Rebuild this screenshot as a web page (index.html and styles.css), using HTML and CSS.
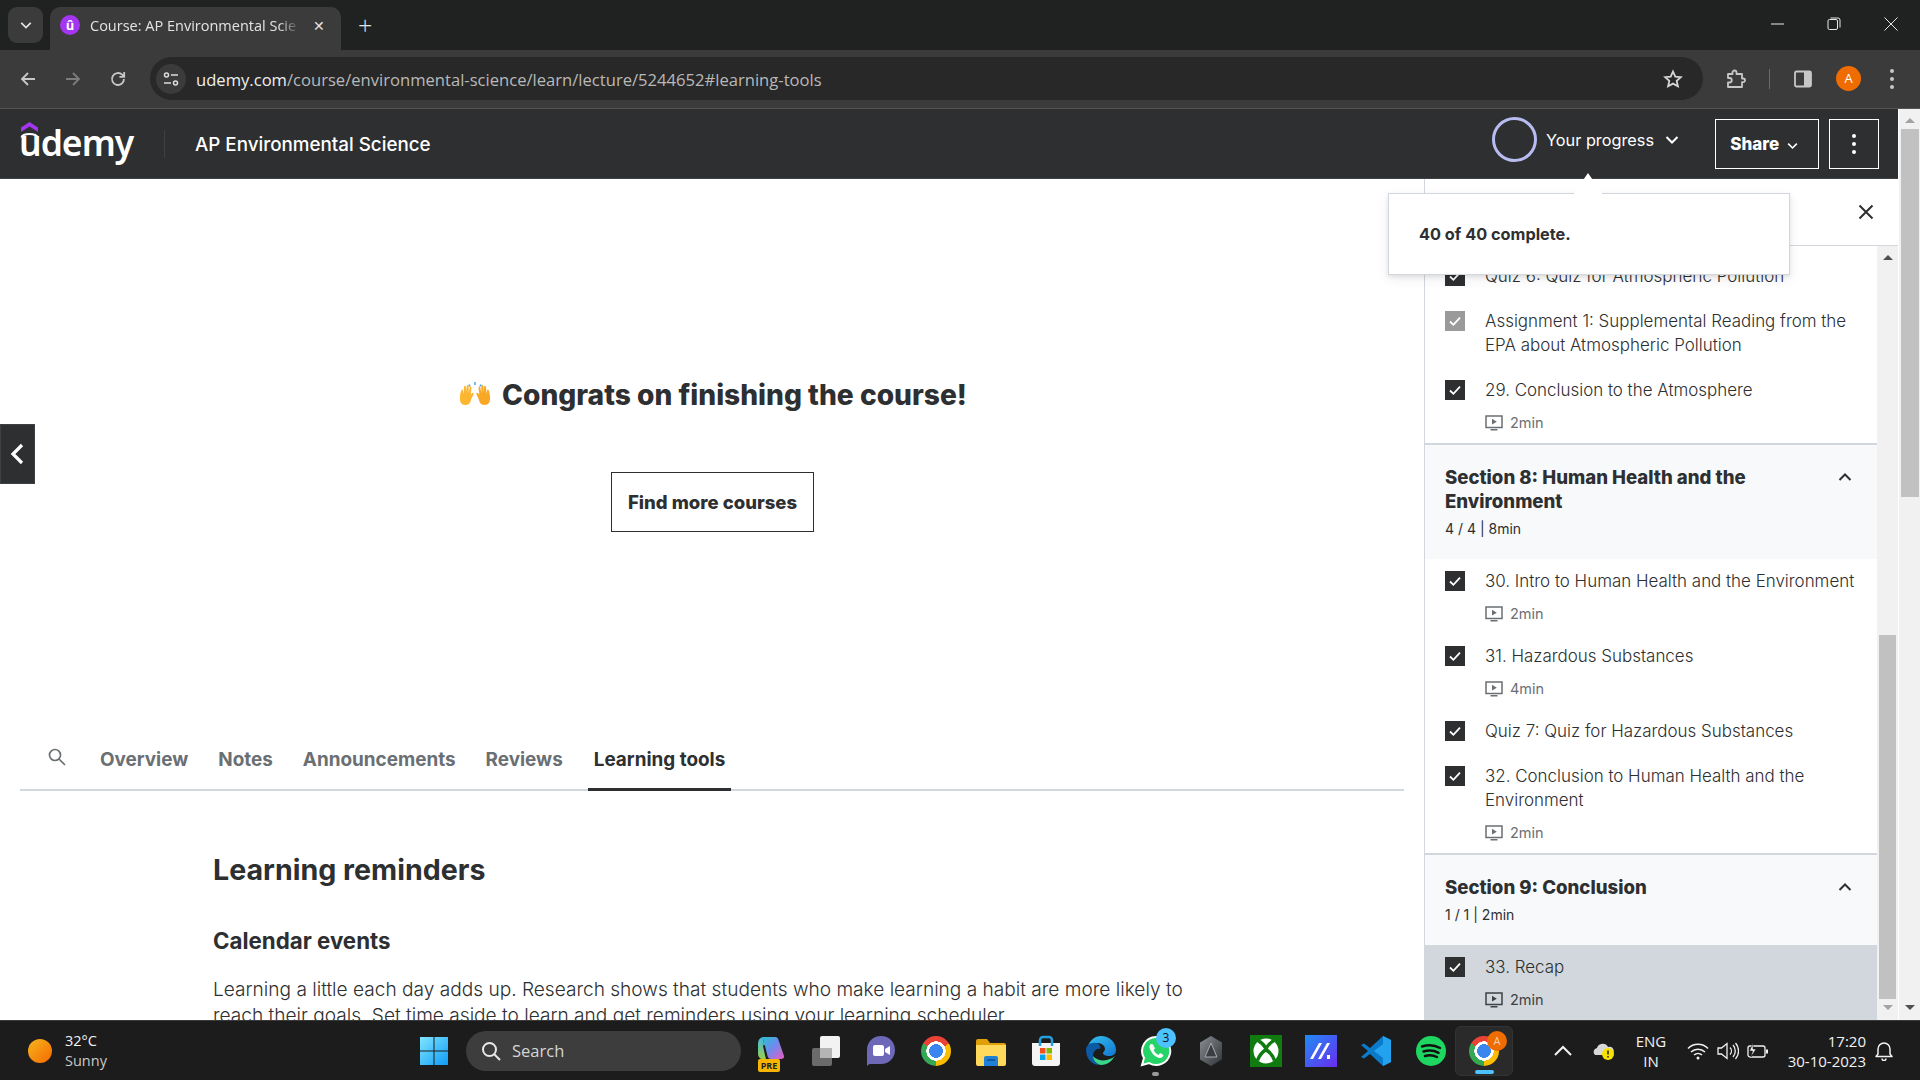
FILE: index.html
```html
<!DOCTYPE html>
<html lang="en">
<head>
    <meta charset="UTF-8">
    <title>Course: AP Environmental Science</title>
    <link rel="stylesheet" href="styles.css">
</head>
<body>
    <svg class="sprite" width="0" height="0">
        <symbol id="check" viewBox="0 0 20 20"><path d="M5 10.500l3.400 3.300L15 6.600" fill="none" stroke="#fff" stroke-width="1.800"/></symbol>
        <symbol id="video" viewBox="0 0 18 16"><path d="M1 1h16v11.500H1z" fill="none" stroke="currentColor" stroke-width="1.500"/><path d="M7 3.800v5.800l4.800-2.900z" fill="currentColor"/><path d="M5.500 14h7v1.500h-7z" fill="currentColor"/></symbol>
        <symbol id="chev-up" viewBox="0 0 14 10"><path d="M1.500 8L7 2.500 12.500 8" fill="none" stroke="currentColor" stroke-width="2"/></symbol>
        <symbol id="chev-down" viewBox="0 0 14 10"><path d="M1.500 2L7 7.500 12.500 2" fill="none" stroke="currentColor" stroke-width="2"/></symbol>
    </svg>

    <div class="tabstrip">
        <button class="tab-list"><svg width="12" height="9"><use href="#chev-down"/></svg></button>
        <div class="tab">
            <span class="favicon">û</span>
            <span class="tab-title">Course: AP Environmental Scie</span>
            <span class="tab-close">✕</span>
        </div>
        <span class="new-tab">+</span>
        <div class="win-controls">
            <svg width="14" height="14" viewBox="0 0 14 14"><path d="M1 7h13" stroke="#e8e8e8"/></svg>
            <svg width="14" height="14" viewBox="0 0 14 14"><rect x="1" y="2.500" width="9.500" height="10" rx="1.500" fill="none" stroke="#e8e8e8"/><path d="M3.500 1h7.500a2 2 0 0 1 2 2v7.500" fill="none" stroke="#e8e8e8"/></svg>
            <svg width="14" height="14" viewBox="0 0 14 14"><path d="M.5.500l13 13M13.500.500l-13 13" stroke="#e8e8e8"/></svg>
        </div>
    </div>

    <div class="toolbar">
        <div class="nav-btns">
            <svg width="18" height="18" viewBox="0 0 18 18"><path d="M16 9H3M9 3L3 9l6 6" fill="none" stroke="#c7c7c7" stroke-width="1.800"/></svg>
            <svg width="18" height="18" viewBox="0 0 18 18"><path d="M2 9h13M9 3l6 6-6 6" fill="none" stroke="#7c7c7c" stroke-width="1.800"/></svg>
            <svg width="18" height="18" viewBox="0 0 18 18"><path d="M15 9a6 6 0 1 1-1.800-4.300L15 6.500M15.200 2v4.800h-4.800" fill="none" stroke="#c7c7c7" stroke-width="1.800"/></svg>
        </div>
        <div class="omnibox">
            <span class="site-icon">
                <svg width="16" height="14" viewBox="0 0 16 14"><circle cx="3.500" cy="3" r="2" fill="none" stroke="#ddd" stroke-width="1.500"/><path d="M8 3h7M1 11h7" stroke="#ddd" stroke-width="1.500"/><circle cx="12.500" cy="11" r="2" fill="none" stroke="#ddd" stroke-width="1.500"/></svg>
            </span>
            <span class="url"><b>udemy.com</b>/course/environmental-science/learn/lecture/5244652#learning-tools</span>
            <svg class="star" width="20" height="20" viewBox="0 0 20 20"><path d="M10 2.500l2.300 5.100 5.500.6-4.100 3.700 1.200 5.400L10 14.600l-4.900 2.700 1.200-5.400L2.200 8.200l5.500-.6z" fill="none" stroke="#d6d6d6" stroke-width="1.800"/></svg>
        </div>
        <div class="tool-icons">
            <svg width="20" height="20" viewBox="0 0 20 20"><path d="M2 5h4.500V3.500a2 2 0 0 1 4 0V5H16v4.500h1.200a1.800 1.800 0 0 1 0 3.600H16V18H2v-4.500h1.500a2 2 0 0 0 0-4.500H2z" fill="none" stroke="#c7c7c7" stroke-width="1.800" stroke-linejoin="round"/></svg>
            <span class="tool-sep"></span>
            <svg width="18" height="18" viewBox="0 0 18 18"><rect x="1" y="1.500" width="16" height="15" rx="1.500" fill="none" stroke="#c7c7c7" stroke-width="1.800"/><path d="M10 1.500h6a1 1 0 0 1 1 1v13a1 1 0 0 1-1 1h-6z" fill="#c7c7c7"/></svg>
            <span class="avatar">A</span>
            <span class="kebab"><i></i><i></i><i></i></span>
        </div>
    </div>

    <div class="page">
        <div class="app">
            <header class="course-header">
                <div class="logo">
                    <svg class="logo-mark" width="19" height="16" viewBox="0 0 19 16"><path d="M9.500 0L18 5.500V10L9.500 4.500 1 10V5.500z" fill="#a435f0"/><path d="M1.500 15.500a8 3.500 0 0 1 16 0" fill="none" stroke="#fff" stroke-width="2"/></svg>
                    <span>udemy</span>
                </div>
                <span class="header-sep"></span>
                <div class="course-title">AP Environmental Science</div>
                <div class="progress">
                    <span class="progress-ring"></span>
                    <span>Your progress</span>
                    <svg width="14" height="10"><use href="#chev-down"/></svg>
                </div>
                <button class="share-btn">Share <svg width="11" height="8"><use href="#chev-down"/></svg></button>
                <button class="more-btn"><span class="kebab"><i></i><i></i><i></i></span></button>
            </header>

            <div class="course-body">
                <main class="main">
                    <section class="hero">
                        <h2 class="congrats">
                            <svg width="34" height="27" viewBox="0 0 34 27">
                                <path d="M2 15c0-3 1-6 1.500-7s1.500 0 1.500 1l.500 3 .500-7c0-1.500 2-1.500 2 0v6l.700-7c0-1.500 2-1.500 2 0v7l1-5.500c.300-1.500 2-1 1.800.500l-.800 6.500c1-1 2.200-2 3-1.500.500 1-2 4-3 8-.800 3-3 4-5.500 4-4 0-5.700-3-5.200-8.500z" fill="#fdb62f"/>
                                <path d="M32 15c0-3-1-6-1.500-7s-1.500 0-1.500 1l-.500 3-.500-7c0-1.500-2-1.500-2 0v6l-.700-7c0-1.500-2-1.500-2 0v7l-1-5.500c-.300-1.500-2-1-1.800.500l.800 6.500c-1-1-2.200-2-3-1.500-.500 1 2 4 3 8 .800 3 3 4 5.500 4 4 0 5.700-3 5.200-8.500z" fill="#f9a825"/>
                                <path d="M11 2.500l1 2M17 0v3M23 2.500l-1 2" stroke="#4aa8e8" stroke-width="1.500"/>
                            </svg>
                            Congrats on finishing the course!
                        </h2>
                        <button class="find-btn">Find more courses</button>
                    </section>

                    <nav class="tabs">
                        <svg class="tabs-search" width="20" height="20" viewBox="0 0 20 20"><circle cx="8" cy="8" r="5.500" fill="none" stroke="#6a6f73" stroke-width="1.700"/><path d="M12 12l6 6" stroke="#6a6f73" stroke-width="1.700"/></svg>
                        <a class="tabs-item">Overview</a>
                        <a class="tabs-item">Notes</a>
                        <a class="tabs-item">Announcements</a>
                        <a class="tabs-item">Reviews</a>
                        <a class="tabs-item tabs-item-active">Learning tools</a>
                    </nav>

                    <section class="tools">
                        <h2 class="tools-title">Learning reminders</h2>
                        <h3 class="tools-sub">Calendar events</h3>
                        <p class="tools-text">Learning a little each day adds up. Research shows that students who make learning a habit are more likely to reach their goals. Set time aside to learn and get reminders using your learning scheduler.</p>
                    </section>
                </main>

                <aside class="sidebar">
                    <div class="sidebar-head">
                        <svg width="16" height="16" viewBox="0 0 16 16"><path d="M1.500 1.500l13 13M14.500 1.500l-13 13" stroke="#2d2f31" stroke-width="2"/></svg>
                    </div>
                    <div class="sidebar-body">
                        <div class="curriculum">
                            <div class="item">
                                <span class="box"><svg width="20" height="20"><use href="#check"/></svg></span>
                                <div class="item-text">Quiz 6: Quiz for Atmospheric Pollution</div>
                            </div>
                            <div class="item">
                                <span class="box box-muted"><svg width="20" height="20"><use href="#check"/></svg></span>
                                <div class="item-text">Assignment 1: Supplemental Reading from the EPA about Atmospheric Pollution</div>
                            </div>
                            <div class="item">
                                <span class="box"><svg width="20" height="20"><use href="#check"/></svg></span>
                                <div class="item-text">29. Conclusion to the Atmosphere
                                    <div class="dur"><svg width="18" height="16"><use href="#video"/></svg>2min</div>
                                </div>
                            </div>
                            <div class="section">
                                <div class="section-main">
                                    <div class="section-title">Section 8: Human Health and the Environment</div>
                                    <div class="section-meta">4 / 4 | 8min</div>
                                </div>
                                <svg class="section-chev" width="14" height="10"><use href="#chev-up"/></svg>
                            </div>
                            <div class="item">
                                <span class="box"><svg width="20" height="20"><use href="#check"/></svg></span>
                                <div class="item-text">30. Intro to Human Health and the Environment
                                    <div class="dur"><svg width="18" height="16"><use href="#video"/></svg>2min</div>
                                </div>
                            </div>
                            <div class="item">
                                <span class="box"><svg width="20" height="20"><use href="#check"/></svg></span>
                                <div class="item-text">31. Hazardous Substances
                                    <div class="dur"><svg width="18" height="16"><use href="#video"/></svg>4min</div>
                                </div>
                            </div>
                            <div class="item">
                                <span class="box"><svg width="20" height="20"><use href="#check"/></svg></span>
                                <div class="item-text">Quiz 7: Quiz for Hazardous Substances</div>
                            </div>
                            <div class="item">
                                <span class="box"><svg width="20" height="20"><use href="#check"/></svg></span>
                                <div class="item-text">32. Conclusion to Human Health and the Environment
                                    <div class="dur"><svg width="18" height="16"><use href="#video"/></svg>2min</div>
                                </div>
                            </div>
                            <div class="section">
                                <div class="section-main">
                                    <div class="section-title">Section 9: Conclusion</div>
                                    <div class="section-meta">1 / 1 | 2min</div>
                                </div>
                                <svg class="section-chev" width="14" height="10"><use href="#chev-up"/></svg>
                            </div>
                            <div class="item item-current">
                                <span class="box"><svg width="20" height="20"><use href="#check"/></svg></span>
                                <div class="item-text">33. Recap
                                    <div class="dur"><svg width="18" height="16"><use href="#video"/></svg>2min</div>
                                </div>
                            </div>
                        </div>
                        <div class="scrollbar scrollbar-inner">
                            <span class="arrow-up arrow-dark"></span>
                            <span class="thumb"></span>
                            <span class="arrow-down"></span>
                        </div>
                    </div>
                </aside>
            </div>
        </div>
        <div class="scrollbar scrollbar-page">
            <span class="arrow-up"></span>
            <span class="thumb"></span>
            <span class="arrow-down arrow-dark"></span>
        </div>

        <button class="panel-toggle"><svg width="16" height="24" viewBox="0 0 16 24"><path d="M13 3L4 12l9 9" fill="none" stroke="#fff" stroke-width="3.200"/></svg></button>
        <div class="tooltip">40 of 40 complete.</div>
    </div>

    <footer class="taskbar">
        <div class="weather">
            <span class="sun"></span>
            <div class="weather-text">32°C<span>Sunny</span></div>
        </div>
        <svg class="winlogo" width="30" height="30" viewBox="0 0 30 30">
            <defs><linearGradient id="wg" x1="0" y1="0" x2="1" y2="1"><stop offset="0" stop-color="#7fe6ff"/><stop offset="1" stop-color="#0f9bf5"/></linearGradient></defs>
            <path d="M1 1h13.500v13.500H1zM15.500 1H29v13.500H15.500zM1 15.500h13.500V29H1zM15.500 15.500H29V29H15.500z" fill="url(#wg)"/>
        </svg>
        <div class="searchbox">
            <svg width="22" height="22" viewBox="0 0 22 22"><circle cx="9.500" cy="9.500" r="6.500" fill="none" stroke="#e8e8e8" stroke-width="2"/><path d="M14 14l6 6" stroke="#e8e8e8" stroke-width="2"/></svg>
            Search
        </div>
        <div class="apps">
            <span class="app-icon">
                <svg width="32" height="32" viewBox="0 0 32 32"><defs><linearGradient id="cp" x1="0" y1="0" x2="1" y2="1"><stop offset="0" stop-color="#27c3c9"/><stop offset=".45" stop-color="#6b8cf0"/><stop offset="1" stop-color="#e85bc0"/></linearGradient><linearGradient id="cp2" x1="0" y1="0" x2="0" y2="1"><stop offset="0" stop-color="#3fb7e8"/><stop offset="1" stop-color="#9bd04a"/></linearGradient></defs><path d="M9 2h11c2 0 3 1 3.500 3L29 21c.500 2-1 3-3 3H16c-2 0-3-1-3.500-3L10 11c-.500-2-2-1-2.500 1z" fill="url(#cp)"/><path d="M9 2C5 2 3 5 3 9v9c0 4 2 6 5 6h3l-1-4-2-9c-.500-2 1-7 1-8z" fill="url(#cp2)"/></svg>
                <span class="pre">PRE</span>
            </span>
            <span class="app-icon">
                <svg width="32" height="32" viewBox="0 0 32 32"><rect x="2" y="13" width="20" height="18" rx="2" fill="#6b6b6b"/><rect x="10" y="1" width="20" height="22" rx="2" fill="#f2f2f2"/><rect x="10" y="13" width="12" height="10" fill="#b5b5b5"/></svg>
            </span>
            <span class="app-icon">
                <svg width="32" height="32" viewBox="0 0 32 32"><path d="M16 1c8 0 14 6 14 14s-6 14-14 14H5c-1 0-2 1-3 2 0-3 0-10 0-16C2 7 8 1 16 1z" fill="#6d68b8"/><rect x="8" y="10" width="11" height="11" rx="2" fill="#fff"/><path d="M20 14l5-3v9l-5-3z" fill="#fff"/></svg>
            </span>
            <span class="app-icon"><span class="chrome"></span></span>
            <span class="app-icon">
                <svg width="32" height="32" viewBox="0 0 32 32"><path d="M1 6a2 2 0 0 1 2-2h9l3 4h14a2 2 0 0 1 2 2v3H1z" fill="#e0a008"/><path d="M1 10h30v19a2 2 0 0 1-2 2H3a2 2 0 0 1-2-2z" fill="#ffd95c"/><path d="M9 23a2 2 0 0 1 2-2h10a2 2 0 0 1 2 2v8H9z" fill="#1e80d6"/><path d="M12 25h8" stroke="#0b4f91" stroke-width="1.500"/></svg>
            </span>
            <span class="app-icon">
                <svg width="32" height="32" viewBox="0 0 32 32"><path d="M2 8h28v20a3 3 0 0 1-3 3H5a3 3 0 0 1-3-3z" fill="#f4f4f4"/><path d="M10 11V5a3 3 0 0 1 3-3h6a3 3 0 0 1 3 3v6" fill="none" stroke="#23a0e0" stroke-width="2.500"/><path d="M10 13h5.500v5.500H10z" fill="#f25022"/><path d="M16.500 13H22v5.500h-5.500z" fill="#7fba00"/><path d="M10 19.500h5.500V25H10z" fill="#00a4ef"/><path d="M16.500 19.500H22V25h-5.500z" fill="#ffb900"/></svg>
            </span>
            <span class="app-icon">
                <svg width="32" height="32" viewBox="0 0 32 32"><defs><linearGradient id="eg" x1="0" y1="0" x2="1" y2="1"><stop offset="0" stop-color="#35c1f1"/><stop offset="1" stop-color="#1277d0"/></linearGradient></defs><path d="M16 1c8 0 15 6 15 14 0 4-3 6-7 6-3 0-6-1-6-3 0-1 2-2 2-4 0-3-3-6-8-6-5 0-9 3-10 7C3 7 9 1 16 1z" fill="url(#eg)"/><path d="M1 15c0-5 5-8 10-7 4 1 5 4 4 6-3-1-7 2-7 7 0 4 3 8 8 9C8 31 1 24 1 15z" fill="#0c59a4"/><path d="M16 30c-5-1-8-5-8-9 0 0 5 6 14 4 3-1 7-2 8-5-2 6-8 10-14 10z" fill="#3ad68a"/></svg>
            </span>
            <span class="app-icon">
                <svg width="32" height="32" viewBox="0 0 32 32"><path d="M16 2a14 14 0 0 0-12 21L2 30l7.200-1.900A14 14 0 1 0 16 2z" fill="#25d366" stroke="#fff" stroke-width="2"/><path d="M11 9c-2 1-2 4 0 7 2 4 5 6 8 7 2 .500 4-1 4.500-3l-3.500-2-1.500 2c-2-1-4-3-5-5l1.500-1.500L13 9.500z" fill="#fff"/></svg>
                <span class="count-badge">3</span>
                <span class="run-dot"></span>
            </span>
            <span class="app-icon">
                <svg width="32" height="32" viewBox="0 0 32 32"><defs><linearGradient id="hx" x1="0" y1="0" x2="1" y2="1"><stop offset="0" stop-color="#8b8f94"/><stop offset="1" stop-color="#2f3236"/></linearGradient></defs><path d="M16 1l11 6.500v17L16 31 5 24.500v-17z" fill="url(#hx)"/><path d="M16 8l6 14H10z" fill="#3a3d41" stroke="#a9adb2"/></svg>
            </span>
            <span class="app-icon">
                <svg width="32" height="32" viewBox="0 0 32 32"><rect width="32" height="32" fill="#107c10"/><circle cx="16" cy="16" r="12.500" fill="#fff"/><path d="M8 5.500c3.500 2 6.500 5 8 8 1.500-3 4.500-6 8-8M16 14.500c-3 2-7 6.500-8.500 11M16 14.500c3 2 7 6.500 8.500 11" fill="none" stroke="#107c10" stroke-width="3.500"/></svg>
            </span>
            <span class="app-icon">
                <svg width="32" height="32" viewBox="0 0 32 32"><defs><linearGradient id="mx" x1="0" y1="0" x2="1" y2="1"><stop offset="0" stop-color="#1f8cf5"/><stop offset="1" stop-color="#6a2cf0"/></linearGradient></defs><rect width="32" height="32" fill="url(#mx)"/><path d="M5 24L14 8h3L8 24zM13 24l9-16h3l-9 16z" fill="#fff"/><path d="M22 20h3v4h-3z" fill="#fff"/></svg>
            </span>
            <span class="app-icon">
                <svg width="32" height="32" viewBox="0 0 32 32"><path d="M23 1l8 4v22l-8 4-13-12-6 4.500L1 22l7-6-7-6 3-1.500L10 13z" fill="#0a7acb"/><path d="M23 1l8 4v22l-8 4zM23 9l-9 7 9 7z" fill="#23a3ee" fill-rule="evenodd"/></svg>
            </span>
            <span class="app-icon">
                <svg width="32" height="32" viewBox="0 0 32 32"><circle cx="16" cy="16" r="15" fill="#1ed760"/><path d="M7 11.500c6-1.800 13-1.300 18 1.500M8.500 16.500c5-1.500 11-1 15 1.300M10 21c4-1 8.500-.700 12 1" fill="none" stroke="#111" stroke-width="2.500" stroke-linecap="round"/></svg>
            </span>
            <span class="app-icon app-icon-active">
                <span class="chrome"></span>
                <span class="profile-badge">A</span>
                <span class="run-bar"></span>
            </span>
        </div>
        <div class="tray">
            <svg width="20" height="12" viewBox="0 0 20 12"><path d="M2 10l8-8 8 8" fill="none" stroke="#f2f2f2" stroke-width="2"/></svg>
            <svg class="tray-cloud" width="22" height="20" viewBox="0 0 22 20"><path d="M2 14a4 4 0 0 1 2-7 6 6 0 0 1 11-1 4 4 0 0 1 3 8z" fill="#d8d8d8"/><circle cx="15" cy="13" r="6" fill="#f8e100"/><path d="M15 9.500v4M15 15v1.500" stroke="#222" stroke-width="1.500"/></svg>
            <div class="lang">ENG<br>IN</div>
            <svg width="22" height="18" viewBox="0 0 22 18"><path d="M1 6.500a14 14 0 0 1 20 0M4 10a10 10 0 0 1 14 0M7 13a6 6 0 0 1 8 0" fill="none" stroke="#f2f2f2" stroke-width="1.500"/><circle cx="11" cy="16" r="1.500" fill="#f2f2f2"/></svg>
            <svg width="22" height="18" viewBox="0 0 22 18"><path d="M1 6h3.500L10 1.500v15L4.500 12H1z" fill="none" stroke="#f2f2f2" stroke-width="1.300"/><path d="M13 5.500a5 5 0 0 1 0 7M16 3a9 9 0 0 1 0 12M18.500 1a12 12 0 0 1 0 16" fill="none" stroke="#f2f2f2" stroke-width="1.300"/></svg>
            <svg width="22" height="18" viewBox="0 0 22 18"><rect x="1" y="4" width="17" height="11" rx="2" fill="none" stroke="#f2f2f2" stroke-width="1.300"/><path d="M19 7.500h2v4h-2z" fill="#f2f2f2"/><path d="M6 1L2.500 9h3L4 15l5-8H6z" fill="#f2f2f2" stroke="#1c1c1c" stroke-width=".6"/></svg>
            <div class="clock">17:20<br>30-10-2023</div>
            <svg width="18" height="20" viewBox="0 0 18 20"><path d="M3 13V8a6 6 0 0 1 12 0v5l2 2.500H1z" fill="none" stroke="#f2f2f2" stroke-width="1.500" stroke-linejoin="round"/><path d="M7 17.500a2 2 0 0 0 4 0" fill="none" stroke="#f2f2f2" stroke-width="1.500"/></svg>
        </div>
    </footer>
</body>
</html>
```

FILE: styles.css
```css
* {
    box-sizing: border-box;
}

html, body {
    height: 100%;
}

body {
    margin: 0;
    display: flex;
    flex-direction: column;
    overflow: hidden;
    font-family: Inter, "Liberation Sans", sans-serif;
    color: #2d2f31;
    background-color: #fff;
}

button {
    font-family: inherit;
    background: none;
    cursor: pointer;
}

.sprite {
    position: absolute;
}

/* browser chrome */
.tabstrip {
    height: 50px;
    flex: none;
    display: flex;
    align-items: flex-end;
    background-color: #202221;
    color: #e3e3e3;
    font-family: "Open Sans", sans-serif;
}

.tab-list {
    width: 35px;
    height: 36px;
    margin: 0 7px 7px 8px;
    padding: 0;
    border: none;
    border-radius: 9px;
    background-color: #3b3b3b;
    color: #e3e3e3;
}

.tab {
    width: 291px;
    height: 43px;
    display: flex;
    align-items: center;
    padding: 0 15px 7px 10px;
    background-color: #3b3b3b;
    border-radius: 10px 10px 0 0;
}

.favicon {
    width: 20px;
    height: 20px;
    flex: none;
    border-radius: 50%;
    background-color: #a435f0;
    color: #fff;
    font-size: 13px;
    font-weight: 700;
    line-height: 20px;
    text-align: center;
}

.tab-title {
    width: 210px;
    margin-left: 10px;
    font-size: 14.500px;
    white-space: nowrap;
    -webkit-mask-image: linear-gradient(to right, #000 90%, transparent);
    mask-image: linear-gradient(to right, #000 90%, transparent);
}

.tab-close {
    margin-left: 13px;
    font-size: 14px;
}

.new-tab {
    margin: 0 0 10px 17px;
    font-size: 25px;
    font-weight: 300;
    line-height: 30px;
}

.win-controls {
    margin: 0 22px 19px auto;
    display: flex;
    gap: 43px;
}

.toolbar {
    height: 59px;
    flex: none;
    display: flex;
    align-items: center;
    padding-bottom: 1px;
    background-color: #3b3b3b;
    border-bottom: 1px solid #555;
}

.nav-btns {
    width: 150px;
    flex: none;
    display: flex;
    gap: 27px;
    padding-left: 19px;
}

.omnibox {
    width: 1553px;
    height: 43px;
    flex: none;
    display: flex;
    align-items: center;
    padding: 0 20px 0 6px;
    border-radius: 22px;
    background-color: #282828;
}

.site-icon {
    width: 30px;
    height: 30px;
    display: flex;
    align-items: center;
    justify-content: center;
    border-radius: 50%;
    background-color: #3b3b3b;
}

.url {
    margin: 1px 0 0 10px;
    font-family: "Open Sans", sans-serif;
    font-size: 16.600px;
    color: #b9b9b9;
    white-space: nowrap;
}

.url b {
    font-weight: 400;
    color: #eee;
}

.star {
    margin-left: auto;
}

.tool-icons {
    flex: 1;
    display: flex;
    align-items: center;
    padding-left: 23px;
}

.tool-sep {
    width: 1px;
    height: 20px;
    margin: 0 24px 0 23px;
    background-color: #6a6a6a;
}

.avatar {
    width: 25px;
    height: 25px;
    margin-left: 24px;
    border-radius: 50%;
    background-color: #ef6c00;
    color: #fff;
    font-family: "Open Sans", sans-serif;
    font-size: 13px;
    line-height: 25px;
    text-align: center;
}

.kebab {
    display: flex;
    flex-direction: column;
    align-items: center;
    gap: 4px;
}

.kebab i {
    width: 4px;
    height: 4px;
    border-radius: 50%;
    background-color: #c7c7c7;
}

.tool-icons .kebab {
    margin-left: 29px;
}

/* page */
.page {
    position: relative;
    flex: 1;
    min-height: 0;
    display: flex;
}

.app {
    flex: 1;
    min-width: 0;
    display: flex;
    flex-direction: column;
}

.course-header {
    height: 70px;
    flex: none;
    display: flex;
    align-items: center;
    padding: 0 19px 0 19px;
    background-color: #2d2f31;
    border-bottom: 1px solid #3e4143;
    color: #fff;
}

.logo {
    position: relative;
    width: 114px;
    margin-bottom: 4px;
    font-family: "Noto Sans", sans-serif;
    font-size: 35.500px;
    font-weight: 600;
    line-height: 44px;
    letter-spacing: -1px;
    white-space: nowrap;
}

.logo-mark {
    position: absolute;
    left: 1px;
    top: 2px;
}

.header-sep {
    width: 1px;
    height: 28px;
    margin: 0 30px 0 31px;
    background-color: #3e4143;
}

.course-title {
    margin-top: 1px;
    font-size: 18.800px;
    font-weight: 500;
}

.progress {
    margin: 0 0 8px auto;
    display: flex;
    align-items: center;
    font-size: 16.300px;
}

.progress-ring {
    width: 45px;
    height: 45px;
    margin-right: 9px;
    border: 3px solid #b8bcf0;
    border-radius: 50%;
}

.progress svg {
    margin-left: 11px;
}

.share-btn {
    width: 104px;
    height: 50px;
    margin-left: 36px;
    padding: 0 6px 0 0;
    border: 1px solid #fff;
    color: #fff;
    font-size: 17px;
    font-weight: 800;
}

.share-btn svg {
    margin-left: 4px;
}

.more-btn {
    width: 50px;
    height: 50px;
    margin-left: 10px;
    display: flex;
    align-items: center;
    justify-content: center;
    border: 1px solid #fff;
}

.more-btn .kebab i {
    background-color: #fff;
}

.course-body {
    flex: 1;
    min-height: 0;
    display: flex;
}

.main {
    width: 1425px;
    flex: none;
    overflow: hidden;
}

.hero {
    height: 552px;
    display: flex;
    flex-direction: column;
    align-items: center;
    justify-content: center;
    gap: 60px;
}

.congrats {
    margin: 0;
    display: flex;
    align-items: center;
    gap: 10px;
    font-size: 28.150px;
    line-height: 34px;
    font-weight: 800;
}

.find-btn {
    width: 203px;
    height: 60px;
    border: 1px solid #2d2f31;
    color: #2d2f31;
    font-size: 18.500px;
    font-weight: 800;
}

.tabs {
    height: 60px;
    margin: 0 21px 0 20px;
    display: flex;
    align-items: stretch;
    gap: 20px;
    border-bottom: 2px solid #d1d7dc;
}

.tabs-search {
    margin: 16px 8px 0 27px;
}

.tabs-item {
    display: flex;
    align-items: center;
    height: 60px;
    padding: 0 5px 3px;
    font-size: 18.900px;
    font-weight: 700;
    color: #6a6f73;
}

.tabs-item-active {
    padding: 0 6px;
    color: #2d2f31;
    border-bottom: 3px solid #2d2f31;
}

.tools {
    padding: 61px 0 0 213px;
    max-width: 1200px;
}

.tools-title {
    margin: 0 0 39px;
    font-size: 28.600px;
    line-height: 36px;
    font-weight: 700;
}

.tools-sub {
    margin: 0 0 21px;
    font-size: 22.300px;
    line-height: 28px;
    font-weight: 700;
}

.tools-text {
    margin: 0;
    font-size: 19.100px;
    font-weight: 350;
    line-height: 26px;
}

/* course content */
.sidebar {
    flex: 1;
    min-width: 0;
    display: flex;
    flex-direction: column;
    border-left: 1px solid #d1d7dc;
    margin-left: -1px;
}

.sidebar-head {
    height: 67px;
    flex: none;
    display: flex;
    align-items: center;
    justify-content: flex-end;
    padding: 0 24px 0 0;
    border-bottom: 1px solid #d1d7dc;
}

.sidebar-body {
    flex: 1;
    min-height: 0;
    display: flex;
}

.curriculum {
    flex: 1;
    min-width: 0;
    padding-top: 8px;
    overflow: hidden;
}

.item {
    display: flex;
    padding: 10px 15px 11px 20px;
    font-size: 16.950px;
    font-weight: 300;
    line-height: 24px;
}

.item-current {
    background-color: #d1d7dc;
}

.box {
    width: 20px;
    height: 20px;
    flex: none;
    margin: 2px 20px 0 0;
    background-color: #2d2f31;
}

.box svg {
    display: block;
}

.box-muted {
    background-color: #9a9a9a;
}

.item-text {
    flex: 1;
    min-width: 0;
}

.dur {
    height: 18px;
    margin-top: 12px;
    display: flex;
    align-items: center;
    gap: 7px;
    font-size: 14.500px;
    font-weight: 400;
    line-height: 18px;
    color: #6a6f73;
}

.item-current .dur {
    color: #3e4143;
}

.section {
    display: flex;
    padding: 20px;
    background-color: #f7f9fa;
    border-top: 2px solid #d1d7dc;
}

.section-main {
    flex: 1;
    min-width: 0;
    padding-right: 30px;
}

.section-title {
    font-size: 18.600px;
    line-height: 24px;
    font-weight: 800;
}

.section-meta {
    margin-top: 6px;
    font-size: 14px;
    line-height: 20px;
}

.section-chev {
    flex: none;
    margin: 7px 5px 0 0;
}

.scrollbar {
    flex: none;
    display: flex;
    flex-direction: column;
    align-items: center;
    background-color: #f1f1f1;
}

.scrollbar-inner {
    width: 21px;
    padding-top: 9px;
}

.scrollbar-page {
    width: 22px;
    padding-top: 9px;
    border-left: 1px solid #fff;
}

.thumb {
    background-color: #c1c1c1;
}

.scrollbar-inner .thumb {
    width: 17px;
    height: 364px;
    margin-top: 375px;
}

.scrollbar-page .thumb {
    width: 18px;
    height: 368px;
    margin-top: 6px;
}

.arrow-up, .arrow-down {
    flex: none;
    width: 0;
    height: 0;
    border-left: 5px solid transparent;
    border-right: 5px solid transparent;
}

.arrow-up {
    border-bottom: 5px solid #a3a3a3;
}

.arrow-down {
    margin-top: auto;
    margin-bottom: 10px;
    border-top: 5px solid #a3a3a3;
}

.arrow-up.arrow-dark {
    border-bottom-color: #505050;
}

.arrow-down.arrow-dark {
    border-top-color: #505050;
}

.panel-toggle {
    position: absolute;
    left: 0;
    top: 315px;
    width: 35px;
    height: 60px;
    padding: 0 2px 0 0;
    display: flex;
    align-items: center;
    justify-content: center;
    border: 1px solid #3e4143;
    background-color: #2d2f31;
}

.tooltip {
    position: absolute;
    left: 1388px;
    top: 84px;
    width: 402px;
    height: 82px;
    display: flex;
    align-items: center;
    padding-left: 30px;
    background-color: #fff;
    border: 1px solid #d1d7dc;
    box-shadow: 0 2px 4px rgba(0, 0, 0, 0.08), 0 4px 12px rgba(0, 0, 0, 0.08);
    font-size: 16.300px;
    font-weight: 700;
}

.tooltip::before {
    content: "";
    position: absolute;
    left: 184px;
    top: -21px;
    width: 30px;
    height: 22px;
    background-color: #fff;
    clip-path: polygon(50% 0, 100% 100%, 0 100%);
}

/* taskbar */
.taskbar {
    height: 60px;
    flex: none;
    display: flex;
    align-items: center;
    background-color: #1c1c1c;
    border-top: 1px solid #3a3a3a;
    color: #f2f2f2;
    font-family: "Open Sans", sans-serif;
}

.weather {
    width: 419px;
    flex: none;
    display: flex;
    align-items: center;
    gap: 13px;
    padding-left: 28px;
}

.sun {
    width: 24px;
    height: 24px;
    border-radius: 50%;
    background: linear-gradient(135deg, #f6b51e, #f56a00);
}

.weather-text {
    font-size: 14.500px;
    line-height: 20px;
}

.weather-text span {
    display: block;
    color: #c9c9c9;
}

.winlogo {
    flex: none;
}

.searchbox {
    width: 275px;
    height: 40px;
    flex: none;
    margin-left: 17px;
    display: flex;
    align-items: center;
    gap: 10px;
    padding-left: 14px;
    border-radius: 20px;
    background-color: #3d3d3d;
    font-size: 16.500px;
    color: #d5d5d5;
}

.apps {
    display: flex;
    margin-left: 2px;
}

.app-icon {
    position: relative;
    width: 55px;
    height: 50px;
    display: flex;
    align-items: center;
    justify-content: center;
}

.app-icon-active {
    width: 58px;
    margin-left: -3px;
    border-radius: 6px;
    background-color: #2a2a2a;
    border: 1px solid #333;
}

.chrome {
    width: 30px;
    height: 30px;
    border-radius: 50%;
    background:
        radial-gradient(circle, #3b86ee 0 32%, #fff 33% 45%, transparent 46%),
        conic-gradient(#ea4335 0 60deg, #fbbc04 60deg 180deg, #34a853 180deg 300deg, #ea4335 300deg);
}

.pre {
    position: absolute;
    left: 15px;
    bottom: 4px;
    width: 22px;
    height: 13px;
    border-radius: 2px;
    background-color: #f7b500;
    color: #222;
    font-size: 9px;
    font-weight: 700;
    line-height: 13px;
    text-align: center;
}

.count-badge {
    position: absolute;
    right: 7px;
    top: 2px;
    width: 20px;
    height: 20px;
    border-radius: 50%;
    background-color: #4cc2ff;
    color: #111;
    font-size: 12px;
    line-height: 20px;
    text-align: center;
}

.run-dot {
    position: absolute;
    left: 24px;
    bottom: 0;
    width: 7px;
    height: 4px;
    border-radius: 2px;
    background-color: #9a9a9a;
}

.profile-badge {
    position: absolute;
    right: 5px;
    top: 4px;
    width: 20px;
    height: 20px;
    border-radius: 50%;
    background-color: #ef6c00;
    color: #f5d0b0;
    font-size: 11px;
    line-height: 20px;
    text-align: center;
}

.run-bar {
    position: absolute;
    left: 19px;
    bottom: 1px;
    width: 19px;
    height: 4px;
    border-radius: 2px;
    background-color: #4cc2ff;
}

.tray {
    flex: 1;
    display: flex;
    align-items: center;
    padding-left: 40px;
}

.lang {
    width: 50px;
    margin: 0 11px;
    font-size: 15px;
    line-height: 20px;
    text-align: center;
}

.tray svg + svg {
    margin-left: 8px;
}

.tray .tray-cloud {
    margin-left: 20px;
}

.clock {
    width: 90px;
    margin: 0 9px 0 7px;
    font-size: 15px;
    line-height: 20px;
    text-align: right;
    white-space: nowrap;
}
```
